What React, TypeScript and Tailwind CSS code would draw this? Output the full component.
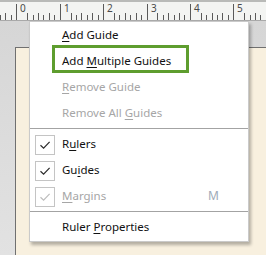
import React from "react";

const majors = [16.3, 59.7, 103.1, 146.5, 189.9, 233.3];
const step = 43.4 / 8;

function Ruler() {
  const ticks: { x: number; tall: boolean }[] = [];
  for (let m = -1; m < majors.length; m++) {
    const base = m < 0 ? majors[0] - 43.4 : majors[m];
    for (let i = 2; i < 8; i++) {
      const x = base + i * step;
      if (x < 0 || x > 266) continue;
      ticks.push({ x, tall: i % 2 === 0 });
    }
  }
  return (
    <div className="h-[21px] w-full bg-[#f3f4f2] border-t-2 border-[#b9bab8] border-b border-b-[#a9a9a9] shrink-0">
      <svg width="266" height="18" className="block">
        {majors.map((x, i) => (
          <g key={i}>
            <line x1={Math.round(x) + 0.5} y1={2} x2={Math.round(x) + 0.5} y2={18} stroke="#5a5a5a" strokeWidth={1} />
            <text x={Math.round(x) + 4} y={9.5} fontSize={10} fill="#4a4a4a" fontFamily="'Noto Sans', sans-serif">
              {i}
            </text>
          </g>
        ))}
        {ticks.map((t, i) => (
          <line
            key={i}
            x1={Math.round(t.x) + 0.5}
            y1={t.tall ? 11 : 13}
            x2={Math.round(t.x) + 0.5}
            y2={18}
            stroke="#5a5a5a"
            strokeWidth={1}
          />
        ))}
      </svg>
    </div>
  );
}

function Check({ disabled }: { disabled?: boolean }) {
  return (
    <div className="w-5 h-5 border border-[#c4c4c4] flex items-center justify-center bg-white">
      <svg width="14" height="14" viewBox="0 0 14 14">
        <path d="M2.5 7.2 L5.6 10.2 L11.6 3.8" fill="none" stroke={disabled ? "#bdbdbd" : "#2b2b2b"} strokeWidth={1.2} />
      </svg>
    </div>
  );
}

function Item({
  children,
  check,
  disabled,
  shortcut,
}: {
  children: React.ReactNode;
  check?: boolean;
  disabled?: boolean;
  shortcut?: string;
}) {
  return (
    <div className={`h-[26px] flex items-center relative ${disabled ? "text-[#a6a6a6]" : "text-[#111111]"}`}>
      <div className="w-[32px] pl-[5px] flex items-center">{check !== undefined && <Check disabled={disabled} />}</div>
      <span className="flex-1 pb-[2px]">{children}</span>
      {shortcut && <span className="w-[40px] pb-[2px] text-[#9eaab8] text-[12px]">{shortcut}</span>}
    </div>
  );
}

function U({ children }: { children: React.ReactNode }) {
  return <span className="underline underline-offset-2 decoration-1">{children}</span>;
}

function Sep() {
  return <div className="mt-px mb-[3px] h-px bg-[#a3a3a3]" />;
}

export default function App() {
  return (
    <div className="w-[266px] h-[255px] relative overflow-hidden bg-[#dcdcdc] flex flex-col font-['Noto_Sans',sans-serif] text-[11.5px]">
      <Ruler />
      <div className="flex-1 flex flex-col pl-[15px] pt-[26px] bg-gradient-to-b from-[#d6d6d6] to-[#e2e2e2]">
        <div className="flex-1 bg-[#f8f0df] border-l border-t border-[#707070]" />
      </div>

      <div className="absolute left-[29px] top-[21px] w-[220px] bg-white border border-[#cacaca] shadow-[2px_3px_3px_rgba(0,0,0,0.28)] pt-px">
        <Item>
          <U>A</U>dd Guide
        </Item>
        <Item>
          Add <U>M</U>ultiple Guides
        </Item>
        <Item disabled>
          <U>R</U>emove Guide
        </Item>
        <Item disabled>
          Remove All <U>G</U>uides
        </Item>
        <Sep />
        <Item check>
          R<U>u</U>lers
        </Item>
        <Item check>
          Gu<U>i</U>des
        </Item>
        <Item check disabled shortcut="M">
          <U>M</U>argins
        </Item>
        <Sep />
        <Item>
          Ruler <U>P</U>roperties
        </Item>
        <div className="absolute left-[22px] top-[23px] w-[137px] h-[28px] border-[3px] border-[#5e9d2e]" />
      </div>
    </div>
  );
}
